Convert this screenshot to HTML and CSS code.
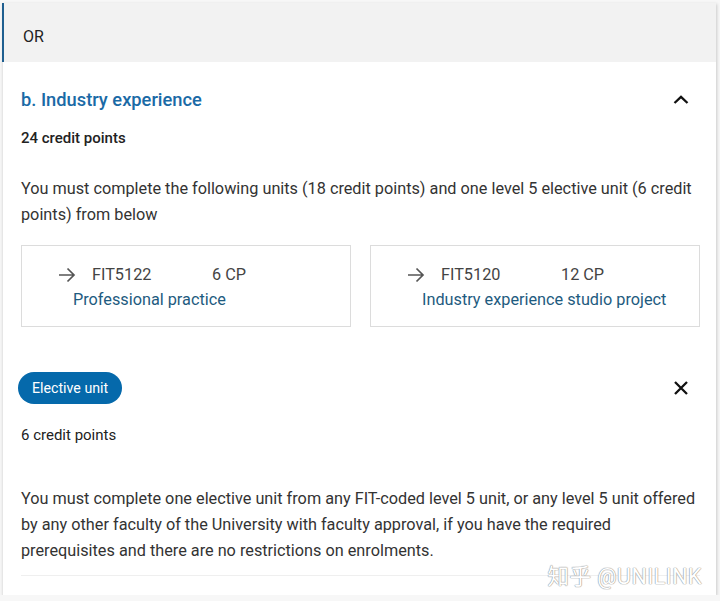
FILE: index.html
```html
<!DOCTYPE html>
<html>
<head>
<meta charset="utf-8">
<link rel="stylesheet" href="styles.css">
</head>
<body>
<div class="panel">
  <div class="or">OR</div>
  <div class="section">
    <div class="head">
      <h2 class="title">b. Industry experience</h2>
      <svg class="icon" width="16" height="16" viewBox="0 0 16 16"><path d="M1.5 11 L8 4.8 L14.5 11" fill="none" stroke="#111" stroke-width="2.3"/></svg>
    </div>
    <div class="cp-bold">24 credit points</div>
    <p class="para">You must complete the following units (18 credit points) and one level 5 elective unit (6 credit points) from below</p>
    <div class="cards">
      <div class="card">
        <div class="row1">
          <svg class="arrow" width="18" height="18" viewBox="0 0 18 18"><path d="M1 9 H16 M9.5 2.5 L16 9 L9.5 15.5" fill="none" stroke="#555" stroke-width="1.7"/></svg>
          <span class="code">FIT5122</span>
          <span class="cp">6 CP</span>
        </div>
        <div class="name">Professional practice</div>
      </div>
      <div class="card">
        <div class="row1">
          <svg class="arrow" width="18" height="18" viewBox="0 0 18 18"><path d="M1 9 H16 M9.5 2.5 L16 9 L9.5 15.5" fill="none" stroke="#555" stroke-width="1.7"/></svg>
          <span class="code">FIT5120</span>
          <span class="cp">12 CP</span>
        </div>
        <div class="name">Industry experience studio project</div>
      </div>
    </div>
    <div class="head2">
      <span class="badge">Elective unit</span>
      <svg class="icon" width="16" height="16" viewBox="0 0 16 16"><path d="M2 2 L14 14 M14 2 L2 14" fill="none" stroke="#111" stroke-width="2.3"/></svg>
    </div>
    <div class="cp-reg">6 credit points</div>
    <p class="para para2">You must complete one elective unit from any FIT-coded level 5 unit, or any level 5 unit offered by any other faculty of the University with faculty approval, if you have the required prerequisites and there are no restrictions on enrolments.</p>
    <div class="divider"></div>
  </div>
  <div class="watermark">知乎 @UNILINK</div>
</div>
</body>
</html>
```
FILE: styles.css
```css
html, body {
  margin: 0;
  padding: 0;
  background: #f7f7f7;
  font-family: Roboto, "Noto Sans CJK SC", sans-serif;
  color: #222;
}
.panel {
  position: relative;
  margin: 3px 4px 0 2px;
  background: #fff;
  height: 592px;
  box-shadow: 1px 1px 3px rgba(0,0,0,0.18);
  border-left: 1px solid #e6e6e6;
}
.or {
  height: 59px;
  box-sizing: border-box;
  background: #f2f2f2;
  border-left: 2px solid #1f5f90;
  margin-left: -1px;
  padding: 7px 0 0 19px;
  display: flex;
  align-items: center;
  font-size: 16px;
  color: #222;
}
.section {
  padding: 26px 16px 0 18px;
}
.head {
  display: flex;
  align-items: center;
  justify-content: space-between;
  height: 24px;
  padding-right: 11px;
}
.title {
  margin: 0;
  font-size: 18.3px;
  font-weight: 500;
  color: #1a6aa6;
  line-height: 24px;
}
.cp-bold {
  margin-top: 15px;
  font-size: 15px;
  font-weight: 500;
  line-height: 22px;
}
.para {
  margin: 27px 0 0;
  font-size: 16.25px;
  line-height: 26px;
  color: #333;
}
.cards {
  margin-top: 17px;
  display: grid;
  grid-template-columns: 1fr 1fr;
  gap: 19px;
}
.card {
  border: 1px solid #dcdcdc;
  padding: 16px 0 0 0;
  box-sizing: border-box;
  height: 82px;
}
.row1 {
  display: flex;
  align-items: center;
  height: 25px;
  padding-left: 36px;
}
.arrow {
  flex: none;
}
.code {
  margin-left: 16px;
  width: 120px;
  font-size: 16.25px;
  color: #444;
}
.cp {
  font-size: 16.25px;
  color: #444;
}
.name {
  padding-left: 51px;
  font-size: 16.25px;
  line-height: 25px;
  color: #1e5b80;
}
.head2 {
  margin-top: 45px;
  display: flex;
  align-items: center;
  justify-content: space-between;
  padding-right: 11px;
  height: 32px;
}
.badge {
  margin-left: -3px;
  height: 32px;
  padding: 0 14px;
  border-radius: 16px;
  background: #0569ab;
  color: #fff;
  font-size: 14.2px;
  display: flex;
  align-items: center;
}
.cp-reg {
  margin-top: 20px;
  font-size: 15px;
  line-height: 22px;
  color: #222;
}
.para2 {
  margin-top: 40px;
}
.divider {
  margin-top: 11px;
  height: 1px;
  background: #efefef;
}
.watermark {
  position: absolute;
  right: 14px;
  top: 556px;
  font-size: 21.5px;
  color: #fff;
  letter-spacing: 0.5px;
  text-shadow: 0 0 1px #999, 0 0 1px #999, 0 0 1px #aaa;
}
```
